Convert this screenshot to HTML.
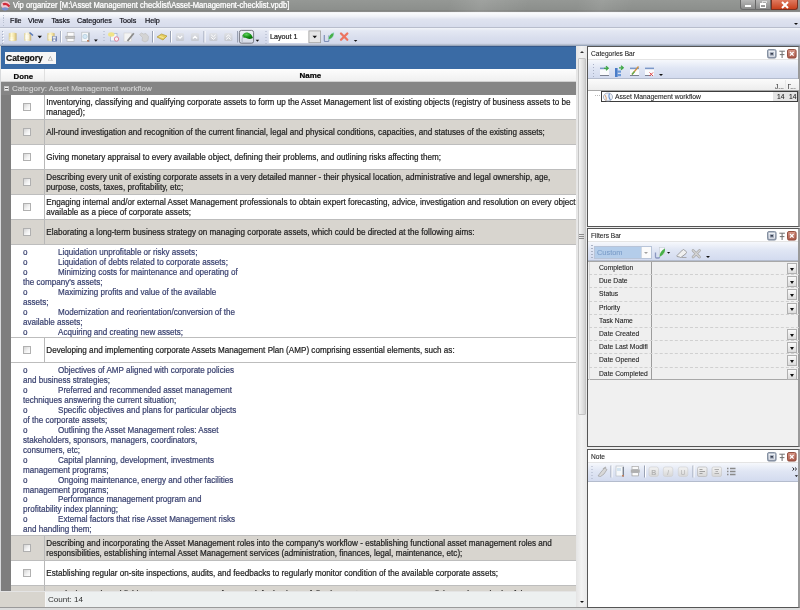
<!DOCTYPE html>
<html><head><meta charset="utf-8">
<style>
*{box-sizing:border-box;margin:0;padding:0}
html,body{width:800px;height:610px;overflow:hidden;background:#ececec;font-family:"Liberation Sans",sans-serif;font-size:8px;color:#000;position:relative}
.a{position:absolute}
#title{left:0;top:0;width:800px;height:12px;background:linear-gradient(105deg,transparent 56%,rgba(255,255,255,.10) 60%,transparent 66%,transparent 72%,rgba(255,255,255,.08) 75%,transparent 79%),linear-gradient(#959895,#8c8f8c 80%,#7c7e7c 92%,#9a9a9a);color:#fff;font-size:7.6px;line-height:12px}
#title span{transform:scaleY(1.12);transform-origin:0 60%;text-shadow:0 0 1px rgba(255,255,255,.35)}
#menu{left:0;top:12px;width:800px;height:16px;background:linear-gradient(#fafbfd,#eff1f8 25%,#dfe3f0 45%,#d7dcec);border-top:1px solid #f4f5f8;border-bottom:1px solid #b8bdcc}
#menu span{position:absolute;top:2px;font-size:7.2px;color:#101018;line-height:12px;}
#tb{left:0;top:28px;width:800px;height:18px;background:linear-gradient(#f2f4f9,#e4e8f3 15%,#dadfee 50%,#d3d9eb 85%,#b4bccc 93%,#8898b0)}
.sep{position:absolute;top:3px;width:1px;height:12px;background:#9aa3b8;border-right:1px solid #fff}
.grip{position:absolute;width:2px;background:repeating-linear-gradient(#aab2c4 0 1px,transparent 1px 3px)}
.arr{position:absolute;width:0;height:0;border-left:2px solid transparent;border-right:2px solid transparent;border-top:2px solid #111}
#grp{left:1px;top:46px;width:575px;height:23px;background:#3a6ba5;border-top:1px solid #34588a}
#catbox{left:5px;top:52px;width:51px;height:12.3px;background:#f6f6f6;font-weight:bold;font-size:8.5px;line-height:13px;padding-left:1px;color:#111}
#hdr{left:1px;top:69px;width:575px;height:13px;background:linear-gradient(#fdfdfd,#f0f0f0);border-bottom:1px solid #d0d0d0}
#grow{left:1px;top:82px;width:575px;height:13px;background:#858585;color:#cfcfcf;font-size:8.07px;line-height:13px}
#lstrip{left:0;top:95px;width:11px;height:496px;background:#7e7e7e;border-left:1px solid #b4b4b4}
.row{position:absolute;left:11px;width:565px;height:25px;border-bottom:1px solid #bdbdbd;font-size:8.12px;color:#1e1e1e}
.w{background:#fff}
.g{background:#d8d5cf}
.row .done{position:absolute;left:0;top:0;width:34px;height:100%;border-right:1px solid #b8b8b8}
.cb{position:absolute;left:12px;top:8px;width:8.4px;height:8.4px;border:1px solid #b0b0b0;background:linear-gradient(135deg,#d4d4d4,#f4f4f4 60%,#fff)}
.row .txt{position:absolute;left:35.3px;top:0;width:540px;white-space:nowrap;line-height:8.7px;transform:scaleY(1.15);transform-origin:0 0}
.brow{position:absolute;left:11px;width:565px;background:#fff;border-bottom:1px solid #bdbdbd;color:#3a4270;font-size:8.07px;line-height:8.7px;padding-top:3.3px}
.brow div{padding-left:12px;white-space:pre;height:9.95px;transform:scaleY(1.15);transform-origin:0 0}
.brow b{font-weight:normal;display:inline-block;width:35px}
#vs{left:576px;top:46px;width:11px;height:561px;background:linear-gradient(90deg,#e4e4e4,#f2f2f2 50%,#e8e8e8)}
#thumb{left:577.5px;top:58px;width:8.5px;height:357px;border:1px solid #c4c4c4;border-radius:1px;background:linear-gradient(90deg,#f4f4f4,#e4e4e4 50%,#d0d0d0)}
#foot{left:0;top:591px;width:576px;height:16px;background:#d8d5ce;border-top:1px solid #e4e4e4}
#count{left:45px;top:592px;width:531px;height:15px;background:#edf0f0;font-size:8.1px;line-height:15px;padding-left:2px;color:#303030;border-left:1px solid #f6f6f6;-webkit-text-stroke-width:0}
#bot{left:0;top:607px;width:800px;height:3px;background:#dcdcdc;border-top:1px solid #9a9a9a}
.panel{position:absolute;left:587px;width:213px;background:#fff;border:1px solid #555;border-right:2px solid #9a9a9a;-webkit-text-stroke-width:0.08px}
.ptitle{position:absolute;left:0;top:0;width:100%;height:13px;background:#fff;border-bottom:1px solid #e4e4e4;font-size:6.6px;line-height:13px;padding-left:3px;color:#222}
.ptb{position:absolute;left:0;top:13px;width:100%;height:19px;background:linear-gradient(#f6f8fc,#e0e6f4 45%,#d3dbef);border-bottom:1px solid #b4bccd}
.pbtn{position:absolute;top:2px;width:9px;height:9px;border-radius:1px}
.pb1{left:179px;border:1px solid #7d8aa0;background:linear-gradient(#d8dee8,#aab4c4)}
.pb2{left:190px;color:#666;font-size:8px;line-height:9px;width:8px}
.pb3{left:199px;border:1px solid #9a4a3a;background:linear-gradient(#e49a88,#c05a48)}
.frow{position:absolute;left:1px;width:210px;height:13.2px;border-bottom:1px dashed #d0d0d0;font-size:6.75px;line-height:12px;color:#1a1a1a}
.frow span{position:absolute;left:10px}
.frow .c2{position:absolute;left:62px;top:0;height:100%;border-left:1px solid #a8a8a8}
.dd{position:absolute;left:198px;top:1px;width:10px;height:11px;border:1px solid #b0b0b0;background:linear-gradient(#fafafa,#dcdcdc)}
.dd:after{content:"";position:absolute;left:2px;top:4px;border-left:2.5px solid transparent;border-right:2.5px solid transparent;border-top:3px solid #111}
.fb{position:absolute;top:4px;width:10px;height:10px;border:1px solid #ccc;border-radius:2px;background:linear-gradient(#f4f4f4,#d8d8d8);font-size:7px;line-height:8px;text-align:center;color:#aaa;font-weight:bold}
</style></head><body><div id="root" style="position:absolute;left:0;top:0;width:800px;height:610px;will-change:transform;-webkit-text-stroke-width:0.2px">
<svg width="0" height="0" style="position:absolute"><defs><linearGradient id="pbg1" x1="0" x2="0" y1="0" y2="1"><stop offset="0" stop-color="#bcc4d0"/><stop offset="1" stop-color="#8c96a8"/></linearGradient><linearGradient id="pbg3" x1="0" x2="0" y1="0" y2="1"><stop offset="0" stop-color="#d89888"/><stop offset="1" stop-color="#a85848"/></linearGradient></defs></svg>
<div id="title" class="a"><span class="a" style="left:13px;top:0">Vip organizer [M:\Asset Management checklist\Asset-Management-checklist.vpdb]</span>
<svg class="a" style="left:0;top:0" width="12" height="12"><ellipse cx="5.5" cy="5" rx="4.5" ry="3.8" fill="#f0c8d0"/><path d="M3 4.5 Q6 2.5 9.5 6.5" stroke="#d02838" stroke-width="2.2" fill="none"/><ellipse cx="5" cy="8.8" rx="3.2" ry="1.6" fill="#7890d0"/></svg>
<div class="a" style="left:740px;top:0;width:31px;height:10px;border:1px solid #6a6a6a;border-top:none;border-radius:0 0 0 3px;background:linear-gradient(#b8b8b8,#8c8c8c)"></div>
<div class="a" style="left:755px;top:0;width:1px;height:9px;background:#666"></div>
<div class="a" style="left:745px;top:5px;width:6px;height:2px;background:#fff;border:0"></div>
<div class="a" style="left:760px;top:3px;width:6px;height:5px;border:1px solid #fff;border-top-width:2px"></div><div class="a" style="left:762px;top:1px;width:5px;height:2px;border:1px solid #ddd;border-bottom:0"></div>
<div class="a" style="left:771px;top:0;width:27px;height:10px;border:1px solid #7a3020;border-top:none;border-radius:0 0 3px 0;background:linear-gradient(#e07a60,#c8401c)"></div>
<svg class="a" style="left:780px;top:1px" width="10" height="8"><path d="M2 1 L8 7 M8 1 L2 7" stroke="#fff" stroke-width="2"/></svg>
</div>
<div id="menu" class="a">
<div class="grip" style="left:2.5px;top:2px;height:12px;width:1px;background:repeating-linear-gradient(#b8c0d0 0 1px,transparent 1px 2.5px)"></div>
<span style="left:10px">File</span><span style="left:28px">View</span><span style="left:51.5px">Tasks</span><span style="left:77px">Categories</span><span style="left:119.5px">Tools</span><span style="left:145px">Help</span>
<div class="arr" style="left:794px;top:10px;border-top-width:2.5px"></div>
</div>
<div id="tb" class="a">
<svg class="a" style="left:0;top:0" width="800" height="18" viewBox="0 28 800 18">
<defs>
<linearGradient id="cyl" x1="0" x2="1" y1="0" y2="0"><stop offset="0" stop-color="#d8c888"/><stop offset=".35" stop-color="#fff8d0"/><stop offset=".7" stop-color="#f0e0a0"/><stop offset="1" stop-color="#c8b070"/></linearGradient>
<linearGradient id="cyl2" x1="0" x2="1" y1="0" y2="0"><stop offset="0" stop-color="#d8cfa0"/><stop offset=".35" stop-color="#fffbe8"/><stop offset=".7" stop-color="#f0e6c0"/><stop offset="1" stop-color="#c0a870"/></linearGradient>
<linearGradient id="gbtn" x1="0" x2="0" y1="0" y2="1"><stop offset="0" stop-color="#dfe1e6"/><stop offset="1" stop-color="#c6c9d0"/></linearGradient>
<linearGradient id="prs" x1="0" x2="0" y1="0" y2="1"><stop offset="0" stop-color="#eef0f6"/><stop offset="1" stop-color="#d4d9e6"/></linearGradient>
<radialGradient id="grn" cx=".4" cy=".3" r=".7"><stop offset="0" stop-color="#60d060"/><stop offset=".6" stop-color="#129012"/><stop offset="1" stop-color="#0a700a"/></radialGradient>
</defs>
<g fill="#a8b0c4"><rect x="2" y="31" width="1" height="1"/><rect x="2" y="34" width="1" height="1"/><rect x="2" y="37" width="1" height="1"/><rect x="2" y="40" width="1" height="1"/><rect x="2" y="43" width="1" height="1"/></g>
<g fill="#fff"><rect x="3" y="32" width="1" height="1"/><rect x="3" y="35" width="1" height="1"/><rect x="3" y="38" width="1" height="1"/><rect x="3" y="41" width="1" height="1"/></g>
<!-- db1 -->
<path d="M8.8 33.2 Q12.7 31.6 16.6 33.2 L16.6 40.4 Q12.7 42 8.8 40.4 Z" fill="url(#cyl)"/>
<path d="M9.5 38 h4 M9.5 39.6 h4" stroke="#fff" stroke-width=".8" opacity=".8"/>
<!-- db2 open -->
<path d="M24 33.2 Q27.6 31.6 31.2 33.2 L31.2 40.4 Q27.6 42 24 40.4 Z" fill="url(#cyl2)"/>
<path d="M25 36 h4 M25 38 h4" stroke="#fff" stroke-width=".8"/>
<path d="M29.5 32.5 L33 35.5" stroke="#5a7ab8" stroke-width="1.6"/>
<path d="M37.5 35.8 h4.5 l-2.25 2.4 z" fill="#111"/>
<!-- db3 save -->
<path d="M47.4 33.2 Q51 31.6 54.6 33.2 L54.6 40.4 Q51 42 47.4 40.4 Z" fill="url(#cyl)"/>
<path d="M48 36 h4 M48 38 h4" stroke="#fff" stroke-width=".8" opacity=".8"/>
<rect x="52" y="36.2" width="5" height="5.2" fill="#7888b4"/>
<rect x="52.8" y="36.6" width="3" height="2" fill="#e8ecf4"/>
<rect x="53.3" y="39.4" width="2" height="1.6" fill="#fff"/>
<rect x="60" y="31" width="1" height="11.5" fill="#a8b0c2"/><rect x="61" y="31" width="1" height="11.5" fill="#fff"/>
<!-- printer -->
<rect x="67.2" y="32.6" width="6.8" height="3.6" fill="#fcfcfc" stroke="#b4b4b4" stroke-width=".6"/>
<rect x="65.8" y="36.2" width="9" height="2.4" fill="#c4c4c4" stroke="#a0a0a0" stroke-width=".5"/>
<rect x="67" y="38.6" width="7" height="3" fill="#fdfdfd" stroke="#b0b0b0" stroke-width=".6"/>
<!-- preview -->
<rect x="81.8" y="32.2" width="7.4" height="9.5" fill="#f6f8fa" stroke="#b0b4b8" stroke-width=".6"/>
<rect x="88.4" y="33" width="0.9" height="8.8" fill="#8c949c"/>
<circle cx="85" cy="36.5" r="2.2" fill="#d4e8f4" stroke="#a8c4d8" stroke-width=".6"/>
<rect x="87" y="40" width="2" height="1.6" fill="#c08060"/>
<path d="M94 39.6 h3.8 l-1.9 2.1 z" fill="#111"/>
<g fill="#a8b0c4"><rect x="103.5" y="31" width="1" height="1"/><rect x="103.5" y="34" width="1" height="1"/><rect x="103.5" y="37" width="1" height="1"/><rect x="103.5" y="40" width="1" height="1"/></g>
<!-- new task -->
<rect x="110.5" y="33.5" width="6.5" height="7.5" fill="#f4f6fa" stroke="#90a8c8" stroke-width=".6"/>
<ellipse cx="111.3" cy="34.5" rx="3.2" ry="2.2" fill="#f0e488"/>
<circle cx="116.5" cy="39" r="2.2" fill="#f8f0f4" stroke="#e07088" stroke-width=".8"/>
<!-- edit grayed -->
<rect x="124" y="33" width="7.5" height="8.5" fill="#f4f4f4" stroke="#d0d0d0" stroke-width=".6"/>
<path d="M127.5 41 L133.8 33.2" stroke="#8c8c8c" stroke-width="1.8"/>
<!-- hand grayed -->
<path d="M139.5 34.5 l2 -1.5 l2 1 l2.5 -0.5 l2.5 3 l-0.5 4 l-3 1.5 l-3 -1.5 l0.5 -3 z" fill="#d4d4d4" stroke="#bcbcbc" stroke-width=".6"/>
<rect x="152" y="31" width="1" height="11.5" fill="#9aa2b4"/><rect x="153" y="31" width="1" height="11.5" fill="#fff"/>
<!-- tag -->
<path d="M157 37 L161.5 34 L167 36 L163 40 Z" fill="#e4cc60" stroke="#b09838" stroke-width=".7"/>
<path d="M159.5 36.5 l4 1" stroke="#fff6b0" stroke-width=".8"/>
<rect x="170" y="31" width="1" height="11.5" fill="#9aa2b4"/><rect x="171" y="31" width="1" height="11.5" fill="#fff"/>
<rect x="175.8" y="33" width="8.3" height="8" rx="1.5" fill="url(#gbtn)"/>
<path d="M177.8 36 l2.2 2.2 l2.2 -2.2" stroke="#fff" stroke-width="1.1" fill="none"/>
<rect x="190.8" y="33" width="8.3" height="8" rx="1.5" fill="url(#gbtn)"/>
<path d="M192.8 38.5 l2.2 -2.2 l2.2 2.2" stroke="#fff" stroke-width="1.1" fill="none"/>
<rect x="203.5" y="31" width="1" height="11.5" fill="#9aa2b4"/><rect x="204.5" y="31" width="1" height="11.5" fill="#fff"/>
<rect x="209.2" y="33" width="8.3" height="8" rx="1.5" fill="url(#gbtn)"/>
<path d="M211.2 34.8 l2.2 2 l2.2 -2 M211.2 37.3 l2.2 2 l2.2 -2" stroke="#fff" stroke-width="1" fill="none"/>
<rect x="224.2" y="33" width="8.3" height="8" rx="1.5" fill="url(#gbtn)"/>
<path d="M226.2 37 l2.2 -2 l2.2 2 M226.2 39.5 l2.2 -2 l2.2 2" stroke="#fff" stroke-width="1" fill="none"/>
<rect x="237" y="31" width="1" height="11.5" fill="#9aa2b4"/>
<!-- pressed -->
<rect x="239.4" y="30.4" width="14.2" height="12.8" rx="2" fill="url(#prs)" stroke="#6c6e78" stroke-width=".9"/>
<path d="M242 36.5 Q243.5 32.2 247.5 32.6 Q251.5 33.5 253 38 Q249 40 245.5 37.8 Q243.5 38 242 36.5 Z" fill="url(#grn)"/>
<path d="M243 36 Q241.6 39 242.2 42" stroke="#b0b8c4" stroke-width="1.1" fill="none"/>
<path d="M255.6 39.8 h3.6 l-1.8 1.9 z" fill="#111"/>
<g fill="#a8b0c4"><rect x="265.5" y="31" width="1" height="1"/><rect x="265.5" y="34" width="1" height="1"/><rect x="265.5" y="37" width="1" height="1"/><rect x="265.5" y="40" width="1" height="1"/><rect x="265.5" y="43" width="1" height="1"/></g>
<!-- combo -->
<rect x="268.8" y="30.4" width="52" height="12.6" fill="#fff"/>
<rect x="308.9" y="30.9" width="11.7" height="11.8" fill="#e6e6e6" stroke="#9c9c9c" stroke-width=".8"/>
<path d="M312.5 35.8 h4.5 l-2.25 2.4 z" fill="#111"/>
<!-- save layout -->
<path d="M324.3 35 v5.5 q0 1 1 1 h2.5 q1 0 1-1 v-5" stroke="#8090b8" stroke-width="1.2" fill="none"/>
<path d="M328 40 Q328.5 34 334 32.5 Q334.5 38 328 40 Z" fill="#48b048" stroke="#b8e0f0" stroke-width=".6"/>
<!-- red x -->
<path d="M341 33.5 L347.3 39.8 M347.3 33.5 L341 39.8" stroke="#ec7460" stroke-width="2.3" stroke-linecap="round"/>
<path d="M353.8 39.9 h3.6 l-1.8 1.8 z" fill="#111"/>
</svg>
<span class="a" style="left:270px;top:4px;font-size:7.17px;line-height:11px;color:#222">Layout 1</span>
</div>
<div id="grp" class="a"></div>
<div id="catbox" class="a">Category<span class="a" style="left:43px;top:0;font-weight:normal;color:#a0a0a0;font-size:6px">&#9651;</span></div>
<div id="hdr" class="a"><span class="a" style="left:12.5px;top:1.5px;font-weight:bold;font-size:7.84px;line-height:12px">Done</span><span class="a" style="left:43px;top:0;height:12px;border-left:1px solid #e0e0e0"></span><span class="a" style="left:298.5px;top:1px;font-weight:bold;font-size:8px;line-height:12px">Name</span></div>
<div id="grow" class="a"><span class="a" style="left:2.5px;top:3.5px;width:5px;height:5px;background:#f0f0f0;border:0.5px solid #c8c8c8"></span><span class="a" style="left:3.5px;top:5.5px;width:3px;height:1px;background:#666"></span><span class="a" style="left:11px">Category: Asset Management workflow</span></div>
<div id="lstrip" class="a"></div><div class="a" style="left:0;top:46px;width:1px;height:561px;background:#d8dadc"></div>

<div class="row w" style="top:95px"><div class="done"><div class="cb"></div></div><div class="txt" style="top:2.8px">Inventorying, classifying and qualifying corporate assets to form up the Asset Management list of existing objects (registry of business assets to be<br>managed);</div></div>
<div class="row g" style="top:120px"><div class="done"><div class="cb"></div></div><div class="txt" style="top:7.8px">All-round investigation and recognition of the current financial, legal and physical conditions, capacities, and statuses of the existing assets;</div></div>
<div class="row w" style="top:145px"><div class="done"><div class="cb"></div></div><div class="txt" style="top:7.8px">Giving monetary appraisal to every available object, defining their problems, and outlining risks affecting them;</div></div>
<div class="row g" style="top:170px"><div class="done"><div class="cb"></div></div><div class="txt" style="top:2.8px">Describing every unit of existing corporate assets in a very detailed manner - their physical location, administrative and legal ownership, age,<br>purpose, costs, taxes, profitability, etc;</div></div>
<div class="row w" style="top:195px"><div class="done"><div class="cb"></div></div><div class="txt" style="top:2.8px">Engaging internal and/or external Asset Management professionals to obtain expert forecasting, advice, investigation and resolution on every object<br>available as a piece of corporate assets;</div></div>
<div class="row g" style="top:220px"><div class="done"><div class="cb"></div></div><div class="txt" style="top:7.8px">Elaborating a long-term business strategy on managing corporate assets, which could be directed at the following aims:</div></div>
<div class="brow" style="top:245px;height:93px">
<div><b>o</b>Liquidation unprofitable or risky assets;</div>
<div><b>o</b>Liquidation of debts related to corporate assets;</div>
<div><b>o</b>Minimizing costs for maintenance and operating of</div>
<div>the company's assets;</div>
<div><b>o</b>Maximizing profits and value of the available</div>
<div>assets;</div>
<div><b>o</b>Modernization and reorientation/conversion of the</div>
<div>available assets;</div>
<div><b>o</b>Acquiring and creating new assets;</div>
</div>
<div class="row w" style="top:338px"><div class="done"><div class="cb"></div></div><div class="txt" style="top:7.8px">Developing and implementing corporate Assets Management Plan (AMP) comprising essential elements, such as:</div></div>
<div class="brow" style="top:363px;height:173px">
<div><b>o</b>Objectives of AMP aligned with corporate policies</div>
<div>and business strategies;</div>
<div><b>o</b>Preferred and recommended asset management</div>
<div>techniques answering the current situation;</div>
<div><b>o</b>Specific objectives and plans for particular objects</div>
<div>of the corporate assets;</div>
<div><b>o</b>Outlining the Asset Management roles: Asset</div>
<div>stakeholders, sponsors, managers, coordinators,</div>
<div>consumers, etc;</div>
<div><b>o</b>Capital planning, development, investments</div>
<div>management programs;</div>
<div><b>o</b>Ongoing maintenance, energy and other facilities</div>
<div>management programs;</div>
<div><b>o</b>Performance management program and</div>
<div>profitability index planning;</div>
<div><b>o</b>External factors that rise Asset Management risks</div>
<div>and handling them;</div>
</div>
<div class="row g" style="top:536px"><div class="done"><div class="cb"></div></div><div class="txt" style="top:2.8px">Describing and incorporating the Asset Management roles into the company's workflow - establishing functional asset management roles and<br>responsibilities, establishing internal Asset Management services (administration, finances, legal, maintenance, etc);</div></div>
<div class="row w" style="top:561px"><div class="done"><div class="cb"></div></div><div class="txt" style="top:7.8px">Establishing regular on-site inspections, audits, and feedbacks to regularly monitor condition of the available corporate assets;</div></div>
<div class="row g" style="top:586px;height:5px;border:0;overflow:hidden"><div class="done"></div><div class="txt" style="top:4.2px">Introducing and establishing Asset Management framework for business, following up Asset Management policies and standards of the company;</div></div>

<div id="vs" class="a"></div>
<div id="thumb" class="a"></div><div class="a" style="left:579px;top:234px;width:4.5px;height:5px;background:repeating-linear-gradient(#8a8a8a 0 1px,transparent 1px 2px)"></div>
<div class="arr" style="left:580px;top:51px;border-top:0;border-bottom:2.5px solid #333;border-left-width:2.5px;border-right-width:2.5px"></div>
<div class="arr" style="left:580px;top:601px;border-left-width:2.5px;border-right-width:2.5px"></div>
<div id="foot" class="a"></div>
<div id="count" class="a">Count: 14</div>
<div id="bot" class="a"></div>

<!-- Categories Bar -->
<div class="panel" style="top:46px;height:181px">
 <div class="ptitle">Categories Bar<svg class="a" style="left:179px;top:2px" width="30" height="11"><rect x="0.5" y="0.5" width="8.6" height="8.6" rx="1.5" fill="url(#pbg1)" stroke="#7c889a" stroke-width=".9"/><rect x="2.2" y="2.4" width="5.2" height="4.8" fill="none" stroke="#f4f6fa" stroke-width=".9"/><rect x="3.6" y="4" width="2.4" height="1.6" fill="#3a4050"/><path d="M12.3 2.2 h5.6 M15.1 2.2 v6.8 M12.8 5.6 h4.6" stroke="#707070" stroke-width="1" fill="none"/><rect x="20.5" y="0.5" width="8.6" height="8.6" rx="1.5" fill="url(#pbg3)" stroke="#8c4434" stroke-width=".9"/><path d="M23 3 l3.6 3.6 M26.6 3 l-3.6 3.6" stroke="#fff" stroke-width="1.3"/></svg></div>
 <div class="ptb">
  <svg class="a" style="left:0;top:0" width="80" height="19" viewBox="587 59 80 19">
<g fill="#a8b0c4"><rect x="592" y="63" width="1" height="1"/><rect x="592" y="66" width="1" height="1"/><rect x="592" y="69" width="1" height="1"/><rect x="592" y="72" width="1" height="1"/><rect x="592" y="75" width="1" height="1"/></g>
<rect x="599" y="67" width="9" height="7.5" fill="#fafbfd"/>
<rect x="599" y="66.6" width="7" height="1.6" fill="#7c98c8"/>
<rect x="599" y="74" width="9" height="1" fill="#7a8090"/>
<path d="M603 67.3 h3.5 M605 65.3 l2.2 2 l-2.2 2" stroke="#40a848" stroke-width="1.3" fill="none"/>
<rect x="614" y="67" width="2.6" height="9" fill="#4a7cc8"/>
<rect x="616" y="69.5" width="4" height="2.2" fill="#6a98d8"/>
<rect x="616" y="73" width="4" height="2.2" fill="#6a98d8"/>
<path d="M618 66.8 h4 M620 64.8 l2.2 2 l-2.2 2" stroke="#40a848" stroke-width="1.3" fill="none"/>
<rect x="629" y="67" width="9" height="7.5" fill="#fafbfd"/>
<rect x="629" y="66.6" width="9" height="1.6" fill="#7c98c8"/>
<rect x="629" y="74" width="9" height="1" fill="#7a8090"/>
<path d="M631 73.5 L637.5 65.5" stroke="#d09040" stroke-width="1.3"/>
<path d="M631 73.5 L633.5 70.5" stroke="#60b050" stroke-width="1.3"/>
<rect x="644" y="67" width="9" height="7.5" fill="#fafbfd"/>
<rect x="644" y="66.6" width="9" height="1.6" fill="#7c98c8"/>
<rect x="644" y="74" width="6" height="1" fill="#7a8090"/>
<path d="M648.5 71.5 l3.5 3.5 M652 71.5 l-3.5 3.5" stroke="#e05050" stroke-width="1"/>
</svg>
<div class="arr" style="left:70.5px;top:14px;border-top-width:2.5px"></div>
 </div>
 <div class="a" style="left:0;top:32px;width:211px;height:12px;background:linear-gradient(#fbfbfb,#ededed);border-bottom:1px solid #a8a8a8"></div>
 <span class="a" style="left:187px;top:34.5px;font-size:6.6px;line-height:10px;color:#333">J...</span>
 <div class="a" style="left:197px;top:33px;width:1px;height:9px;background:#e8e8e8"></div>
 <span class="a" style="left:199.5px;top:34.5px;font-size:6.6px;line-height:10px;color:#333">&#1043;...</span>
 <div class="a" style="left:7px;top:48px;width:5px;height:1px;border-top:1px dotted #b8b8b8"></div>
 <div class="a" style="left:13px;top:44px;width:197px;height:11px;border:1px solid #3c3c3c;background:#fff"></div>
 <div class="a" style="left:185px;top:45px;width:24px;height:9px;background:#e4e4e4"></div>
 <svg class="a" style="left:14px;top:45px" width="12" height="10"><ellipse cx="6" cy="5" rx="4.6" ry="4" fill="#eef2f8" stroke="#9aa4b8" stroke-width=".8"/><path d="M3 3 Q5 6 4 8.5" stroke="#d8a070" stroke-width="1" fill="none"/><path d="M7.5 1.5 Q6 5 8.5 8" stroke="#6a90c8" stroke-width="1.1" fill="none"/></svg>
 <span class="a" style="left:27px;top:44px;font-size:6.73px;line-height:11px;color:#222">Asset Management workflow</span>
 <span class="a" style="left:189px;top:44px;font-size:6.73px;line-height:11px;color:#222">14</span>
 <span class="a" style="left:201px;top:44px;font-size:6.73px;line-height:11px;color:#222">14</span>
</div>
<!-- Filters Bar -->
<div class="panel" style="top:228px;height:219px;background:#f0f0f0">
 <div class="ptitle">Filters Bar<svg class="a" style="left:179px;top:2px" width="30" height="11"><rect x="0.5" y="0.5" width="8.6" height="8.6" rx="1.5" fill="url(#pbg1)" stroke="#7c889a" stroke-width=".9"/><rect x="2.2" y="2.4" width="5.2" height="4.8" fill="none" stroke="#f4f6fa" stroke-width=".9"/><rect x="3.6" y="4" width="2.4" height="1.6" fill="#3a4050"/><path d="M12.3 2.2 h5.6 M15.1 2.2 v6.8 M12.8 5.6 h4.6" stroke="#707070" stroke-width="1" fill="none"/><rect x="20.5" y="0.5" width="8.6" height="8.6" rx="1.5" fill="url(#pbg3)" stroke="#8c4434" stroke-width=".9"/><path d="M23 3 l3.6 3.6 M26.6 3 l-3.6 3.6" stroke="#fff" stroke-width="1.3"/></svg></div>
 <div class="ptb">
  <div class="grip" style="left:3px;top:3px;height:13px"></div>
  <div class="a" style="left:6px;top:4px;width:58px;height:13px;border:1px solid #b8c4d8;background:#b4cdea"></div>
  <div class="a" style="left:53px;top:5px;width:10px;height:11px;background:#fbfbfb;border-left:1px solid #d0d8e4"></div>
  <div class="arr" style="left:56px;top:10px;border-top-color:#a0a0a0;border-left-width:2.5px;border-right-width:2.5px"></div>
  <span class="a" style="left:9px;top:5px;font-size:7.4px;line-height:11px;color:#7a9cc8">Custom</span>
  <svg class="a" style="left:0;top:0" width="212" height="19" viewBox="588 241 212 19">
<rect x="659.5" y="246.5" width="5" height="7" fill="#f4f6f8" stroke="#c0c8d0" stroke-width=".5"/>
<path d="M655.5 251.5 v4.5 q0 1 1 1 h2 q1 0 1 -1" stroke="#8a98c0" stroke-width="1.3" fill="none"/>
<path d="M659.5 256 Q659.5 250 665 247.5 Q665.5 253 659.5 256 Z" fill="#48b048"/>
<path d="M667 251 h3.2 l-1.6 1.8 z" fill="#111"/>
<path d="M677 254.5 L682.5 249 Q683.5 248 684.5 249 L686 250.5 Q687 251.5 686 252.5 L681.5 256 Q680.5 257 679.5 256 L677 255.5 Q676.3 255 677 254.5 Z" fill="#f0f0f0" stroke="#8c8c8c" stroke-width=".8"/>
<path d="M681.5 256.5 h5" stroke="#9a9a9a" stroke-width=".8"/>
<path d="M693 249.5 L699.5 256 M699.5 249.5 L693 256" stroke="#a8a8a8" stroke-width="2.6" stroke-linecap="round"/>
<path d="M693 249.5 L699.5 256 M699.5 249.5 L693 256" stroke="#d4d4d4" stroke-width="1.2" stroke-linecap="round"/>
</svg>
<div class="arr" style="left:117.5px;top:14px"></div>
 </div>
 <div class="a" style="left:0;top:32px;width:210px;height:119px;border-top:1px solid #a8a8a8;border-bottom:1px solid #a8a8a8;background:#efefef"></div>
 <div class="a" style="left:63px;top:33px;width:1px;height:118px;background:#9c9c9c"></div>
 <div class="a" style="left:1px;top:33px;width:1px;height:118px;background:#d8d8d8"></div>
 <div class="frow" style="top:33.0px"><span>Completion</span><div class="dd"></div></div>
 <div class="frow" style="top:46.2px"><span>Due Date</span><div class="dd"></div></div>
 <div class="frow" style="top:59.4px"><span>Status</span><div class="dd"></div></div>
 <div class="frow" style="top:72.6px"><span>Priority</span><div class="dd"></div></div>
 <div class="frow" style="top:85.8px"><span>Task Name</span></div>
 <div class="frow" style="top:99.0px"><span>Date Created</span><div class="dd"></div></div>
 <div class="frow" style="top:112.2px"><span><span style="position:static;display:inline-block;width:50px;overflow:hidden;white-space:nowrap">Date Last Modifi</span></span><div class="dd"></div></div>
 <div class="frow" style="top:125.4px"><span>Date Opened</span><div class="dd"></div></div>
 <div class="frow" style="top:138.6px;border-bottom:0"><span>Date Completed</span><div class="dd"></div></div>

</div>
<!-- Note -->
<div class="panel" style="top:449px;height:159px">
 <div class="ptitle">Note<svg class="a" style="left:179px;top:2px" width="30" height="11"><rect x="0.5" y="0.5" width="8.6" height="8.6" rx="1.5" fill="url(#pbg1)" stroke="#7c889a" stroke-width=".9"/><rect x="2.2" y="2.4" width="5.2" height="4.8" fill="none" stroke="#f4f6fa" stroke-width=".9"/><rect x="3.6" y="4" width="2.4" height="1.6" fill="#3a4050"/><path d="M12.3 2.2 h5.6 M15.1 2.2 v6.8 M12.8 5.6 h4.6" stroke="#707070" stroke-width="1" fill="none"/><rect x="20.5" y="0.5" width="8.6" height="8.6" rx="1.5" fill="url(#pbg3)" stroke="#8c4434" stroke-width=".9"/><path d="M23 3 l3.6 3.6 M26.6 3 l-3.6 3.6" stroke="#fff" stroke-width="1.3"/></svg></div>
 <div class="ptb">
<svg class="a" style="left:0;top:0" width="212" height="19" viewBox="588 463 212 19">
<defs><linearGradient id="fbg" x1="0" x2="0" y1="0" y2="1"><stop offset="0" stop-color="#f4f4f4"/><stop offset="1" stop-color="#d6d6d6"/></linearGradient></defs>
<g fill="#a8b0c4"><rect x="591.5" y="466" width="1" height="1"/><rect x="591.5" y="469" width="1" height="1"/><rect x="591.5" y="472" width="1" height="1"/><rect x="591.5" y="475" width="1" height="1"/><rect x="591.5" y="478" width="1" height="1"/></g>
<path d="M598 476 l3 -4 l3.5 -4 l2.5 1.5 l-3 4.5 l-3.5 2.5 z" fill="#d8d8d8" stroke="#a0a0a0" stroke-width=".7"/>
<path d="M603 469 l3 -2" stroke="#b0b0b0" stroke-width="1.2"/>
<rect x="610.5" y="465.5" width="1" height="12" fill="#9aa2b4"/><rect x="611.5" y="465.5" width="1" height="12" fill="#fff"/>
<rect x="616" y="466" width="7.5" height="10" fill="#f6f8fa" stroke="#b4b8c0" stroke-width=".6"/>
<rect x="622.6" y="467" width="1.4" height="9.5" fill="#7a8290"/>
<rect x="617" y="468" width="4" height="3" fill="#d4e4f0"/>
<rect x="622" y="475" width="2" height="1.5" fill="#c08060"/>
<rect x="632" y="466.5" width="6.5" height="3" fill="#fafafa" stroke="#a8a8a8" stroke-width=".7"/>
<rect x="630.8" y="469.5" width="9" height="3.2" fill="#b0b0b0"/>
<rect x="632" y="472.7" width="6.5" height="3.2" fill="#fcfcfc" stroke="#a0a0a0" stroke-width=".7"/>
<rect x="644" y="465.5" width="1" height="12" fill="#9aa2b4"/><rect x="645" y="465.5" width="1" height="12" fill="#fff"/>
<rect x="649" y="467" width="9.5" height="9.5" rx="2" fill="url(#fbg)" stroke="#cfcfcf" stroke-width=".6"/>
<rect x="663.3" y="467" width="9.5" height="9.5" rx="2" fill="url(#fbg)" stroke="#cfcfcf" stroke-width=".6"/>
<rect x="678.3" y="467" width="9.5" height="9.5" rx="2" fill="url(#fbg)" stroke="#cfcfcf" stroke-width=".6"/>
<text x="653.8" y="474.8" font-family="Liberation Sans" font-size="7" font-weight="bold" fill="#b4b4b4" text-anchor="middle">B</text>
<text x="668" y="474.8" font-family="Liberation Sans" font-size="7" font-style="italic" fill="#b4b4b4" text-anchor="middle">I</text>
<text x="683" y="474.8" font-family="Liberation Sans" font-size="7" fill="#b4b4b4" text-anchor="middle">U</text>
<rect x="692.5" y="465.5" width="1" height="12" fill="#9aa2b4"/><rect x="693.5" y="465.5" width="1" height="12" fill="#fff"/>
<rect x="697.5" y="467" width="9.5" height="9.5" rx="1.5" fill="url(#fbg)" stroke="#b8b8b8" stroke-width=".7"/>
<path d="M699.5 469.5 h3 M699.5 471.5 h5.5 M699.5 473.5 h3" stroke="#9a9a9a" stroke-width=".9"/>
<rect x="712" y="467" width="9.5" height="9.5" rx="1.5" fill="url(#fbg)" stroke="#c8c8c8" stroke-width=".7"/>
<path d="M714.5 469.5 h4.5 M715.5 471.5 h2.5 M714.5 473.5 h4.5" stroke="#a8a8a8" stroke-width=".9"/>
<path d="M727 468.5 h1.5 M727 471.5 h1.5 M727 474.5 h1.5 M730 468.5 h5.5 M730 471.5 h5.5 M730 474.5 h5.5" stroke="#8a8a8a" stroke-width="1.3"/>
<path d="M792.5 467.5 l1.6 1.5 l-1.6 1.5 M795 467.5 l1.6 1.5 l-1.6 1.5" stroke="#111" stroke-width=".9" fill="none"/>
<path d="M794.8 475.3 h3.2 l-1.6 1.7 z" fill="#111"/>
</svg>
</div>
</div>
</div></body></html>
